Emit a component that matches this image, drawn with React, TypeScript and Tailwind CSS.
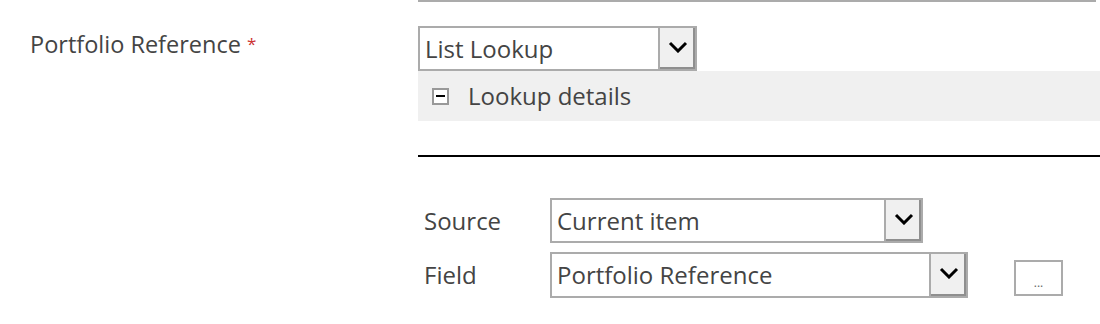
import React from "react";

function Chevron() {
  return (
    <svg width="20" height="12" viewBox="0 0 20 12" className="-mt-[4px]">
      <polyline points="2,2 10,10 18,2" fill="none" stroke="#000" strokeWidth="3" />
    </svg>
  );
}

function Select({ value, width, height }: { value: string; width: string; height: string }) {
  return (
    <div className={`flex ${width} ${height} border-2 border-[#ababab] bg-white`}>
      <div className="flex flex-1 items-center pl-[5px] text-[24px] text-[#444]">{value}</div>
      <div className="flex w-[37px] items-center justify-center border-l-2 border-[#ababab] bg-[#f0f0f0] shadow-[inset_-2px_-2px_0_#8f8f8f]">
        <Chevron />
      </div>
    </div>
  );
}

export default function App() {
  return (
    <div className="flex h-[324px] w-[1100px] overflow-hidden bg-white font-['Open_Sans',sans-serif] text-[#444]">
      <div className="w-[418px] shrink-0 pl-[30px] pt-[27px] text-[23.5px] leading-[34px]">
        Portfolio Reference <span className="relative -top-[3px] text-[17px] text-[#c33]">*</span>
      </div>

      <div className="flex flex-1 flex-col">
        <div className="mr-[4px] h-[2px] bg-[#ababab]" />

        <div className="mt-[24px]">
          <Select value="List Lookup" width="w-[279px]" height="h-[45px]" />
        </div>

        <div className="flex h-[50px] items-center bg-[#f0f0f0] pl-[14px]">
          <div className="flex h-[17px] w-[17px] items-center justify-center border-2 border-[#999] bg-white">
            <div className="h-[2px] w-[9px] bg-black" />
          </div>
          <span className="ml-[19px] text-[24px] text-[#444]">Lookup details</span>
        </div>

        <div className="mt-[34px] h-[2px] bg-black" />

        <div className="mt-[41px] flex items-center">
          <div className="w-[132px] pl-[6px] text-[24px]">Source</div>
          <Select value="Current item" width="w-[373px]" height="h-[45px]" />
        </div>

        <div className="mt-[9px] flex items-start">
          <div className="flex h-[46px] w-[132px] items-center pl-[6px] text-[24px]">Field</div>
          <Select value="Portfolio Reference" width="w-[418px]" height="h-[46px]" />
          <div className="ml-[46px] mt-[8px] flex h-[36px] w-[49px] items-end justify-center border-2 border-[#ababab] bg-white pb-[5px] text-[12px] leading-none text-[#666]">
            ...
          </div>
        </div>
      </div>
    </div>
  );
}
